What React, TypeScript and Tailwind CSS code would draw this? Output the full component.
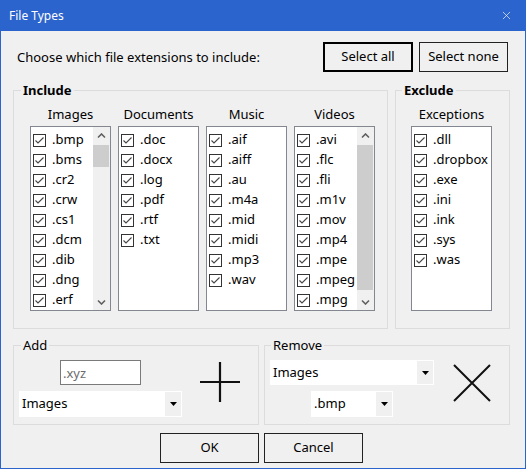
import { X } from 'lucide-react';

const images = ['.bmp', '.bms', '.cr2', '.crw', '.cs1', '.dcm', '.dib', '.dng', '.erf'];
const documents = ['.doc', '.docx', '.log', '.pdf', '.rtf', '.txt'];
const music = ['.aif', '.aiff', '.au', '.m4a', '.mid', '.midi', '.mp3', '.wav'];
const videos = ['.avi', '.flc', '.fli', '.m1v', '.mov', '.mp4', '.mpe', '.mpeg', '.mpg'];
const exceptions = ['.dll', '.dropbox', '.exe', '.ini', '.ink', '.sys', '.was'];

function CheckBox() {
  return (
    <svg width="13" height="13" viewBox="0 0 13 13" className="shrink-0">
      <rect x="0.5" y="0.5" width="12" height="12" fill="#fff" stroke="#333" />
      <path d="M2.5 6.5 L5 9 L10.5 3.5" fill="none" stroke="#444" strokeWidth="1.1" />
    </svg>
  );
}

function Chevron({ down }: { down?: boolean }) {
  return (
    <svg width="9" height="6" viewBox="0 0 9 6">
      <path
        d={down ? 'M1 1.5 L4.5 5 L8 1.5' : 'M1 4.5 L4.5 1 L8 4.5'}
        fill="none"
        stroke="#606060"
        strokeWidth="1.6"
      />
    </svg>
  );
}

function ScrollBar({ thumb }: { thumb: string }) {
  return (
    <div className="flex w-[17px] flex-col bg-[#f0f0f0]">
      <div className="flex h-[17px] items-center justify-center">
        <Chevron />
      </div>
      <div className="flex-1 pt-[1px]">
        <div className={`w-[16px] bg-[#cdcdcd] ${thumb}`} />
      </div>
      <div className="flex h-[17px] items-center justify-center">
        <Chevron down />
      </div>
    </div>
  );
}

function ExtList({ title, items, thumb }: { title: string; items: string[]; thumb?: string }) {
  return (
    <div className="flex w-[81px] flex-col items-center">
      <div className="mb-[4px] h-[16px] leading-[16px]">{title}</div>
      <div className="flex h-[185px] w-[81px] border border-[#828790] bg-white">
        <ul className="min-w-0 flex-1 pl-[2px] pt-[3px]">
          {items.map((ext) => (
            <li key={ext} className="flex h-[20px] items-center gap-[6px] whitespace-nowrap">
              <CheckBox />
              <span>{ext}</span>
            </li>
          ))}
        </ul>
        {thumb && <ScrollBar thumb={thumb} />}
      </div>
    </div>
  );
}

function Dropdown({ value, className }: { value: string; className: string }) {
  return (
    <div className={`flex border border-white bg-white ${className}`}>
      <span className="flex-1 pl-[2px] leading-[23px]">{value}</span>
      <span className="flex w-[16px] items-center justify-center bg-[#f0f0f0]">
        <svg width="7" height="4" viewBox="0 0 7 4">
          <path d="M0 0 H7 L3.5 4 Z" fill="#000" />
        </svg>
      </span>
    </div>
  );
}

export default function App() {
  return (
    <div className="flex h-[469px] w-[526px] flex-col border-x border-b border-[#2b64cd] bg-[#f0f0f0] font-['Noto_Sans',sans-serif] text-[13px] text-black">
      {/* Title bar */}
      <div className="-mx-[1px] flex h-[31px] shrink-0 items-center justify-between bg-[#2b64cd] pl-[9px] pr-[13px] text-[12px] text-white">
        <span>File Types</span>
        <X className="h-[13px] w-[13px]" strokeWidth={1.2} />
      </div>

      {/* Header row */}
      <div className="mt-[11px] flex h-[30px] items-center pl-[16px] pr-[17px]">
        <span className="mt-[2px] flex-1">Choose which file extensions to include:</span>
        <button className="h-[30px] w-[90px] border-2 border-black">Select all</button>
        <button className="ml-[6px] h-[30px] w-[89px] border border-[#222]">Select none</button>
      </div>

      {/* Include / Exclude */}
      <div className="mt-[18px] flex gap-[7px] pl-[12px]">
        <div className="relative flex h-[239px] w-[375px] gap-[7px] border border-[#dcdcdc] pl-[16px] pt-[15px]">
          <span className="absolute -top-[9px] left-[7px] bg-[#f0f0f0] px-[2px] font-bold leading-[16px]">Include</span>
          <ExtList title="Images" items={images} thumb="h-[22px]" />
          <ExtList title="Documents" items={documents} />
          <ExtList title="Music" items={music} />
          <ExtList title="Videos" items={videos} thumb="h-[145px]" />
        </div>
        <div className="relative h-[239px] w-[115px] border border-[#dcdcdc] pl-[15px] pt-[15px]">
          <span className="absolute -top-[9px] left-[6px] bg-[#f0f0f0] px-[2px] font-bold leading-[16px]">Exclude</span>
          <ExtList title="Exceptions" items={exceptions} />
        </div>
      </div>

      {/* Add / Remove */}
      <div className="mt-[16px] flex gap-[5px] pl-[12px]">
        <div className="relative flex h-[80px] w-[246px] border border-[#dcdcdc] pl-[5px] pt-[14px]">
          <span className="absolute -top-[9px] left-[7px] bg-[#f0f0f0] px-[2px] leading-[16px]">Add</span>
          <div className="flex w-[163px] flex-col items-center gap-[6px]">
            <input
              placeholder=".xyz"
              className="h-[25px] w-[81px] border border-[#7a7a7a] bg-white px-[2px] outline-none placeholder:text-[#6d6d6d]"
            />
            <Dropdown value="Images" className="h-[26px] w-[163px]" />
          </div>
          <div className="flex flex-1 justify-center pt-[2px]">
            <svg width="40" height="40" viewBox="0 0 40 40">
              <path d="M20 0 V40 M0 20 H40" stroke="#111" strokeWidth="2.2" />
            </svg>
          </div>
        </div>
        <div className="relative flex h-[80px] w-[246px] border border-[#dcdcdc] pl-[5px] pt-[14px]">
          <span className="absolute -top-[9px] left-[6px] bg-[#f0f0f0] px-[2px] leading-[16px]">Remove</span>
          <div className="flex w-[164px] flex-col items-center gap-[6px]">
            <Dropdown value="Images" className="h-[25px] w-[164px]" />
            <Dropdown value=".bmp" className="h-[26px] w-[82px]" />
          </div>
          <div className="flex flex-1 justify-center pt-[4px]">
            <svg width="38" height="38" viewBox="0 0 38 38">
              <path d="M1 1 L37 37 M37 1 L1 37" stroke="#111" strokeWidth="2" />
            </svg>
          </div>
        </div>
      </div>

      {/* Buttons */}
      <div className="mt-[8px] flex justify-center gap-[5px] pr-[3px]">
        <button className="h-[30px] w-[99px] border border-[#222]">OK</button>
        <button className="h-[30px] w-[99px] border border-[#222]">Cancel</button>
      </div>
    </div>
  );
}
